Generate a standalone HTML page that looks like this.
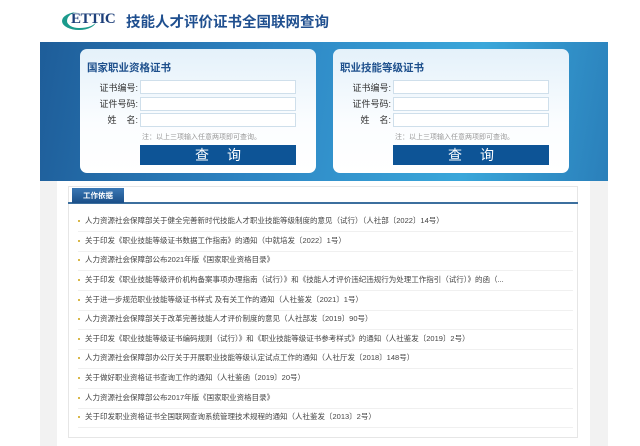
<!DOCTYPE html>
<html><head><meta charset="utf-8"><style>
*{margin:0;padding:0;box-sizing:border-box}
body{width:640px;height:446px;background:#fff;font-family:"Liberation Sans","Noto Sans CJK SC",sans-serif;position:relative;overflow:hidden}
.abs{position:absolute}
.banner{left:40px;top:42px;width:568px;height:139px;background:linear-gradient(100deg,#1e5d99 0%,#2e86c4 40%,#3aa7da 75%,#2a7fba 100%)}
.card{top:49px;width:236px;height:124px;background:linear-gradient(180deg,#e4f1fa,#fbfdff 60%,#fff);border-radius:7px}
.card h3{position:absolute;left:7px;top:11px;font-size:10.5px;color:#1d4f8c;font-weight:bold}
.lbl{position:absolute;font-size:9px;color:#333;width:50px;text-align:right}
.inp{position:absolute;left:60px;width:156px;height:14px;background:#fff;border:1px solid #cfdfeb}
.note{position:absolute;left:62px;top:83px;font-size:7px;color:#999}
.btn{position:absolute;left:60px;top:96px;width:156px;height:20px;background:#0d5496;color:#fff;font-size:14px;text-align:center;line-height:20px;letter-spacing:18px;text-indent:18px}
.gray{left:40px;top:181px;width:568px;height:265px;background:#f2f2f2}
.white{left:57px;top:181px;width:533px;height:265px;background:#fff}
.panel{left:68px;top:186px;width:510px;height:252px;border:1px solid #e6e6e6;background:#fff}
.tabline{left:68px;top:202px;width:510px;height:2px;background:#3c6f9e}
.tab{left:72px;top:188px;width:52px;height:15px;background:linear-gradient(#3a78b5,#1b4f88);color:#fff;font-size:7.5px;font-weight:bold;text-align:center;line-height:15px}
.li{position:absolute;left:78px;font-size:7.5px;color:#444;white-space:nowrap;width:495px;border-bottom:1px solid #f0f0f0;height:19.6px;line-height:18px}
.li:before{content:"";display:inline-block;width:2px;height:2px;background:#d9b84a;margin-right:5px;vertical-align:middle}
</style></head><body>
<div class="abs" style="left:62px;top:12px;width:34px;height:18px;border-radius:50%;border-left:5px solid #1b9a8c;border-bottom:2px solid #1b9a8c"></div>
<div class="abs" style="left:71px;top:11px;font-family:'Liberation Serif',serif;font-weight:bold;font-size:15px;color:#1d3f7a;letter-spacing:-0.5px">ETTIC</div>
<div class="abs" style="left:126px;top:11px;font-size:14.5px;font-weight:bold;color:#1f4f8f">技能人才评价证书全国联网查询</div>
<div class="abs banner"></div>
<div class="abs card" style="left:80px">
<h3>国家职业资格证书</h3>
<div class="lbl" style="left:8px;top:32px">证书编号:</div><div class="inp" style="top:31px"></div>
<div class="lbl" style="left:8px;top:48px">证件号码:</div><div class="inp" style="top:48px"></div>
<div class="lbl" style="left:8px;top:64px">姓&nbsp;&nbsp;&nbsp;&nbsp;名:</div><div class="inp" style="top:64px"></div>
<div class="note">注：以上三项输入任意两项即可查询。</div>
<div class="btn">查询</div>
</div>
<div class="abs card" style="left:333px">
<h3>职业技能等级证书</h3>
<div class="lbl" style="left:8px;top:32px">证书编号:</div><div class="inp" style="top:31px"></div>
<div class="lbl" style="left:8px;top:48px">证件号码:</div><div class="inp" style="top:48px"></div>
<div class="lbl" style="left:8px;top:64px">姓&nbsp;&nbsp;&nbsp;&nbsp;名:</div><div class="inp" style="top:64px"></div>
<div class="note">注：以上三项输入任意两项即可查询。</div>
<div class="btn">查询</div>
</div>
<div class="abs gray"></div>
<div class="abs white"></div>
<div class="abs panel"></div>
<div class="abs tabline"></div>
<div class="abs tab">工作依据</div>
<div class="li" style="top:212px">人力资源社会保障部关于健全完善新时代技能人才职业技能等级制度的意见（试行）（人社部〔2022〕14号）</div>
<div class="li" style="top:232px">关于印发《职业技能等级证书数据工作指南》的通知（中就培发〔2022〕1号）</div>
<div class="li" style="top:251px">人力资源社会保障部公布2021年版《国家职业资格目录》</div>
<div class="li" style="top:271px">关于印发《职业技能等级评价机构备案事项办理指南（试行）》和《技能人才评价违纪违规行为处理工作指引（试行）》的函（...</div>
<div class="li" style="top:291px">关于进一步规范职业技能等级证书样式 及有关工作的通知（人社鉴发〔2021〕1号）</div>
<div class="li" style="top:310px">人力资源社会保障部关于改革完善技能人才评价制度的意见（人社部发〔2019〕90号）</div>
<div class="li" style="top:330px">关于印发《职业技能等级证书编码规则（试行）》和《职业技能等级证书参考样式》的通知（人社鉴发〔2019〕2号）</div>
<div class="li" style="top:349px">人力资源社会保障部办公厅关于开展职业技能等级认定试点工作的通知（人社厅发〔2018〕148号）</div>
<div class="li" style="top:369px">关于做好职业资格证书查询工作的通知（人社鉴函〔2019〕20号）</div>
<div class="li" style="top:389px">人力资源社会保障部公布2017年版《国家职业资格目录》</div>
<div class="li" style="top:408px">关于印发职业资格证书全国联网查询系统管理技术规程的通知（人社鉴发〔2013〕2号）</div>
</body></html>
